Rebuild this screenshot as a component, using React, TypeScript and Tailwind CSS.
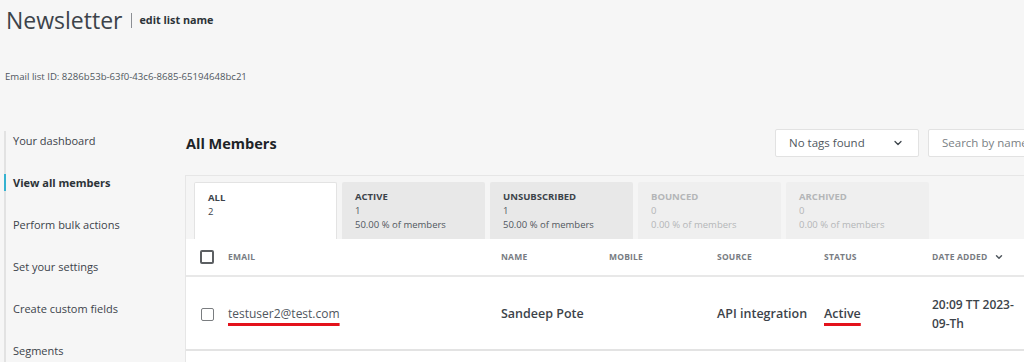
import React from "react";
import { ChevronDown } from "lucide-react";

const tabs = [
  { label: "ALL", count: "2", pct: "", kind: "current" },
  { label: "ACTIVE", count: "1", pct: "50.00 % of members", kind: "on" },
  { label: "UNSUBSCRIBED", count: "1", pct: "50.00 % of members", kind: "on" },
  { label: "BOUNCED", count: "0", pct: "0.00 % of members", kind: "off" },
  { label: "ARCHIVED", count: "0", pct: "0.00 % of members", kind: "off" },
];

const side = [
  "Your dashboard",
  "View all members",
  "Perform bulk actions",
  "Set your settings",
  "Create custom fields",
  "Segments",
];

export default function App() {
  return (
    <div className="w-[1024px] h-[362px] overflow-hidden bg-[#f6f6f6] font-['Open_Sans',sans-serif] text-[#50575e]">
      <div className="pl-[6px] pt-[4px] h-[36px] flex items-center">
        <h1 className="text-[23px] leading-[32px] text-[#3c434a] font-normal">Newsletter</h1>
        <span className="ml-[9px] w-px h-[15px] bg-[#8c8f94]"></span>
        <span className="ml-[7px] text-[10.8px] font-bold text-[#2c3338]">edit list name</span>
      </div>
      <div className="pl-[5px] mt-[34px] text-[9.6px] leading-[14px] text-[#50575e]">
        Email list ID: 8286b53b-63f0-43c6-8685-65194648bc21
      </div>
      <div className="flex mt-[44px]">
        <div className="ml-[4px] w-[181px] shrink-0 mt-[3px] border-l-2 border-[#e2e2e2] pl-[7px] pt-[1px] flex flex-col gap-[24px] h-[240px]">
          {side.map((s, i) => (
            <div
              key={s}
              className={
                "relative text-[11px] leading-[18px] " +
                (i === 1 ? "font-bold text-[#2c3338]" : "text-[#3c434a]")
              }
            >
              {i === 1 && (
                <span className="absolute left-[-9px] top-0 w-[2px] h-[17px] bg-[#35b2d0]"></span>
              )}
              {s}
            </div>
          ))}
        </div>
        <div className="w-[860px] shrink-0 pt-[1px]">
          <div className="h-[28px] flex items-center">
            <div className="pl-[1px] mt-[2px] text-[14.5px] font-bold text-[#1d2327]">All Members</div>
            <div className="ml-auto w-[144px] h-[28px] bg-white border border-[#e2e2e2] rounded-[2px] flex items-center pl-[13px] pr-[14px] text-[11.5px] text-[#50575e]">
              <span>No tags found</span>
              <ChevronDown className="ml-auto" size={12} strokeWidth={2.5} color="#3c434a" />
            </div>
            <div className="ml-[9px] w-[117px] h-[28px] bg-white border border-[#e2e2e2] rounded-[2px] flex items-center pl-[13px] text-[11.5px] text-[#7a7f84] whitespace-nowrap overflow-hidden">
              Search by name
            </div>
          </div>
          <div className="mt-[18px] border-t border-l border-[#e6e6e6] bg-[#f5f5f5]">
            <div className="flex gap-[5px] pl-[8px] pt-[6px]">
              {tabs.map((t) => (
                <div
                  key={t.label}
                  className={
                    "w-[143px] h-[57px] rounded-t-[2px] pl-[13px] pt-[8px] text-[9.5px] leading-[14px] " +
                    (t.kind === "current"
                      ? "bg-white border border-b-0 border-[#e3e3e3] pl-[12px] pt-[7px] text-[#3c434a]"
                      : t.kind === "on"
                      ? "bg-[#e8e8e8] text-[#50575e]"
                      : "bg-[#efefef] text-[#b4b6b8]")
                  }
                >
                  <div className={"font-bold " + (t.kind === "off" ? "" : "text-[#3c434a]")}>{t.label}</div>
                  <div>{t.count}</div>
                  {t.pct && <div>{t.pct}</div>}
                </div>
              ))}
            </div>
            <div className="bg-white">
              <div className="grid grid-cols-[42px_273px_108px_108px_107px_108px_1fr] h-[38px] items-center border-b-2 border-[#e8e8e8] text-[8.5px] font-bold text-[#787c82] tracking-[0.2px]">
                <div className="pl-[14px]">
                  <div className="w-[14px] h-[14px] border-2 border-[#5c5f62] rounded-[2px]"></div>
                </div>
                <div>EMAIL</div>
                <div>NAME</div>
                <div>MOBILE</div>
                <div>SOURCE</div>
                <div>STATUS</div>
                <div className="flex items-center">
                  DATE ADDED
                  <ChevronDown className="ml-[6px]" size={10} strokeWidth={3.5} color="#50575e" />
                </div>
              </div>
              <div className="grid grid-cols-[42px_273px_108px_108px_107px_108px_1fr] h-[74px] items-center border-b-2 border-[#e3e3e3] text-[12.5px] text-[#50575e]">
                <div className="pl-[15px] pt-[2px]">
                  <div className="w-[13px] h-[13px] border-[1.5px] border-[#7a7d80] rounded-[2px]"></div>
                </div>
                <div className="pt-[3px]">
                  <span className="text-[12px] underline decoration-[#e3121b] decoration-[3px] underline-offset-[5px]">
                    testuser2@test.com
                  </span>
                </div>
                <div className="pt-[3px] font-semibold text-[12.5px] text-[#3c434a]">Sandeep Pote</div>
                <div></div>
                <div className="pt-[3px] font-semibold text-[#3c434a]">API integration</div>
                <div className="pt-[3px] font-semibold text-[#3c434a]">
                  <span className="underline decoration-[#e3121b] decoration-[3px] underline-offset-[5px]">Active</span>
                </div>
                <div className="pt-[1px] font-semibold text-[12px] text-[#3c434a] leading-[19px]">
                  20:09 TT 2023-
                  <br />
                  09-Th
                </div>
              </div>
              <div className="h-[20px]"></div>
            </div>
          </div>
        </div>
      </div>
    </div>
  );
}
